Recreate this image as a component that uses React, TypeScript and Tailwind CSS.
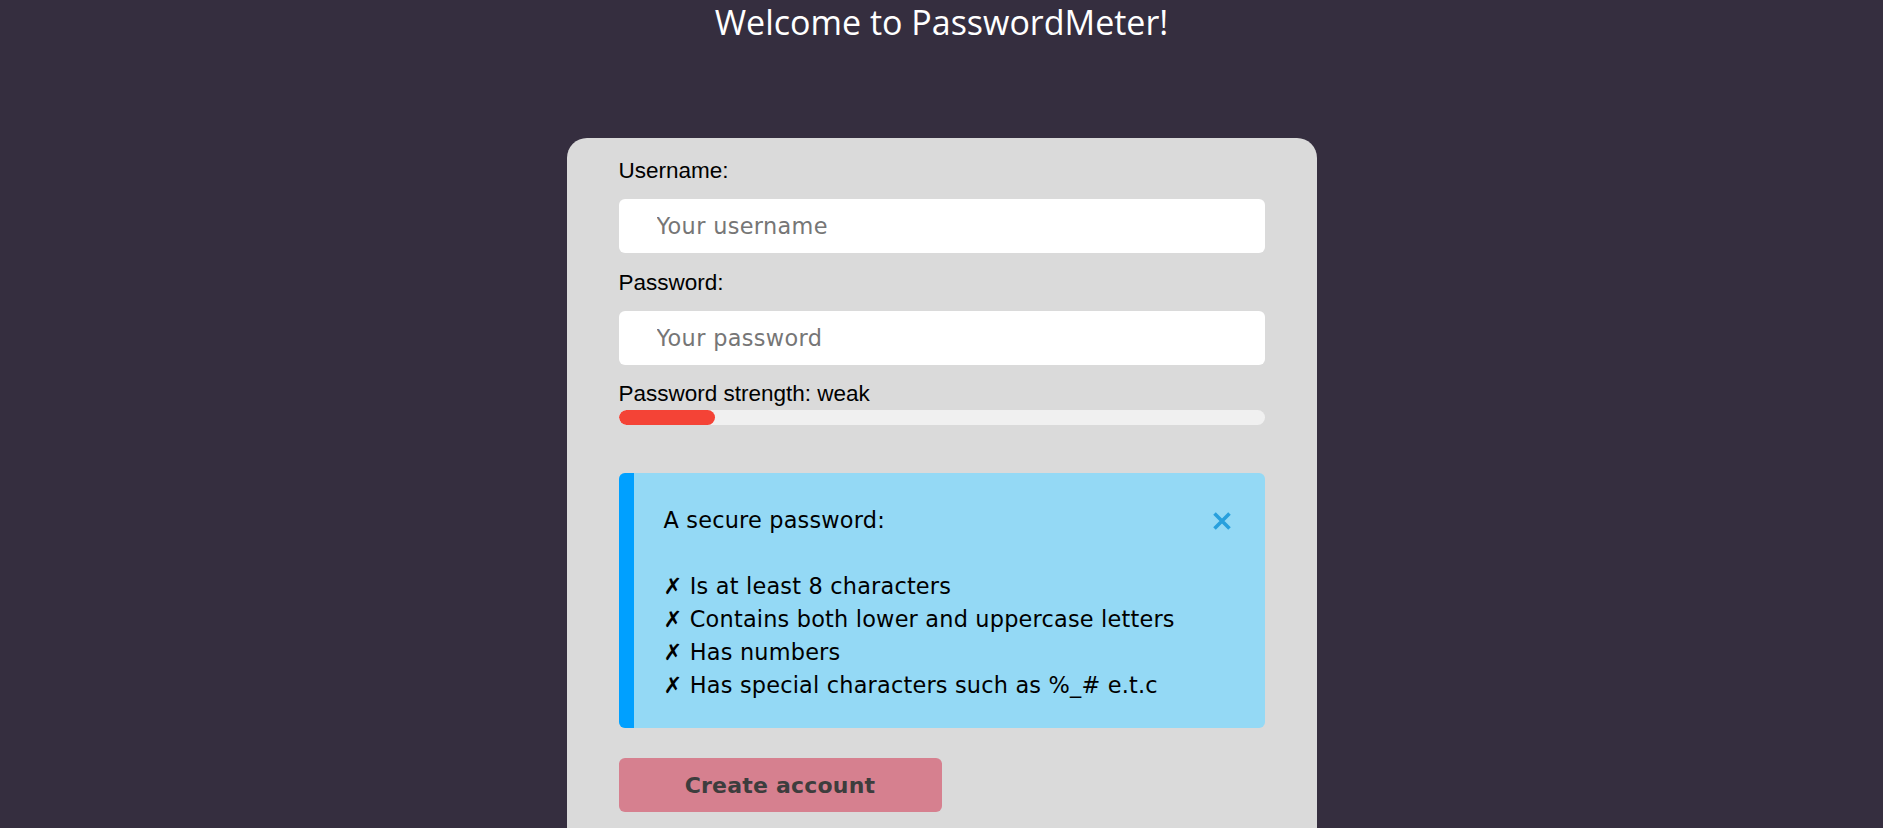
import React from "react";

export default function App() {
  const items = [
    "Is at least 8 characters",
    "Contains both lower and uppercase letters",
    "Has numbers",
    "Has special characters such as %_# e.t.c",
  ];
  return (
    <div className="min-h-screen w-full bg-[#352e3f]">
      <h1 className="m-0 pt-[2px] text-center text-[34px] leading-[40px] font-normal text-white [font-family:'Open_Sans',sans-serif]">
        Welcome to PasswordMeter!
      </h1>
      <div className="mx-auto mt-[96px] w-[750px] rounded-t-[20px] bg-[#dadada] px-[52px] pt-[20px] pb-[24px]">
        <label className="block text-[22.5px] leading-[25px] text-black [font-family:'Liberation_Sans',Arial,sans-serif]">
          Username:
        </label>
        <input
          type="text"
          placeholder="Your username"
          className="mt-[16px] block h-[54px] w-full rounded-[6px] border-0 bg-white pl-[38px] text-[22.4px] tracking-[0.35px] text-black outline-none placeholder:text-[#767676] [font-family:'DejaVu_Sans',Verdana,sans-serif]"
        />
        <label className="mt-[17px] block text-[22.5px] leading-[25px] text-black [font-family:'Liberation_Sans',Arial,sans-serif]">
          Password:
        </label>
        <input
          type="password"
          placeholder="Your password"
          className="mt-[16px] block h-[54px] w-full rounded-[6px] border-0 bg-white pl-[38px] text-[22.4px] tracking-[0.35px] text-black outline-none placeholder:text-[#767676] [font-family:'DejaVu_Sans',Verdana,sans-serif]"
        />
        <div className="mt-[16px] text-[22.5px] leading-[25px] text-black [font-family:'Liberation_Sans',Arial,sans-serif]">
          Password strength: weak
        </div>
        <div className="mt-[4px] h-[15px] w-full overflow-hidden rounded-full bg-[#f0f0f0]">
          <div className="h-full w-[15%] rounded-full bg-[#f44336]" />
        </div>

        <div className="relative mt-[48px] flex rounded-[6px] bg-[#94d9f5] [font-family:'DejaVu_Sans',Verdana,sans-serif]">
          <div className="w-[15px] shrink-0 rounded-l-[6px] bg-[#00a0ff]" />
          <div className="flex-1 pl-[30px] pr-[30px] pt-[31px] pb-[26px] text-[22.4px] tracking-[0.2px] leading-[33px] text-black">
            <div>A secure password:</div>
            <div className="h-[33px]" />
            {items.map((t) => (
              <div key={t}>✗ {t}</div>
            ))}
          </div>
          <button
            type="button"
            aria-label="close"
            className="absolute right-[33px] top-[38px] h-[20px] w-[20px] p-0"
          >
            <svg viewBox="0 0 20 20" width="20" height="20">
              <path
                d="M2.5 2.5 L17.5 17.5 M17.5 2.5 L2.5 17.5"
                stroke="#28a0dd"
                strokeWidth="3.6"
                strokeLinecap="butt"
                fill="none"
              />
            </svg>
          </button>
        </div>

        <button
          type="button"
          className="mt-[30px] block h-[54px] w-[323px] rounded-[6px] bg-[#d6808f] text-[22px] tracking-[0.2px] font-bold text-[#3d3d3d] [font-family:'DejaVu_Sans',Verdana,sans-serif]"
        >
          Create account
        </button>
      </div>
    </div>
  );
}
